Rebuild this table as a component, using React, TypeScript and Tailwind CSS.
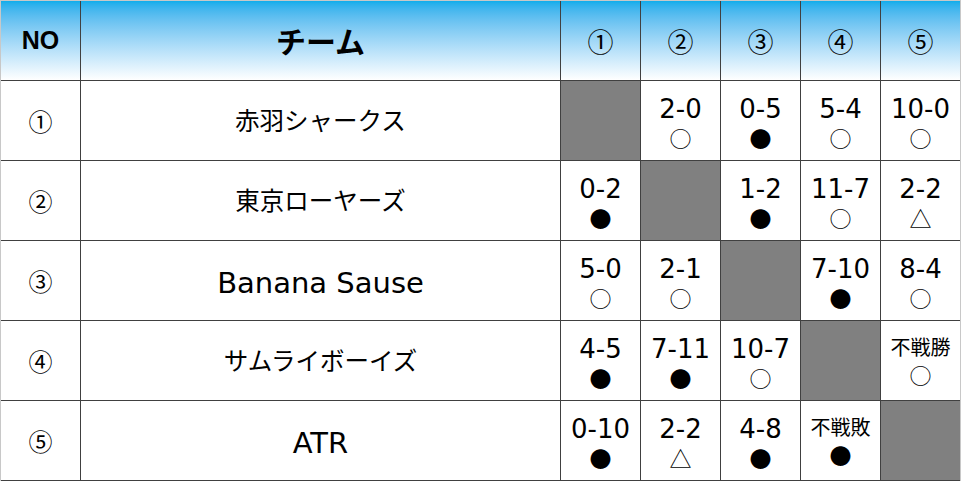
const teams = ["赤羽シャークス", "東京ローヤーズ", "Banana Sause", "サムライボーイズ", "ATR"];
const nums = ["①", "②", "③", "④", "⑤"];

// [score, mark] ; null = self
const results: ([string, string] | null)[][] = [
  [null, ["2-0", "○"], ["0-5", "●"], ["5-4", "○"], ["10-0", "○"]],
  [["0-2", "●"], null, ["1-2", "●"], ["11-7", "○"], ["2-2", "△"]],
  [["5-0", "○"], ["2-1", "○"], null, ["7-10", "●"], ["8-4", "○"]],
  [["4-5", "●"], ["7-11", "●"], ["10-7", "○"], null, ["不戦勝", "○"]],
  [["0-10", "●"], ["2-2", "△"], ["4-8", "●"], ["不戦敗", "●"], null],
];

const head = "bg-gradient-to-b from-[#0cadeb] to-white flex items-center justify-center";
const latin = { fontFamily: '"DejaVu Sans", "Noto Sans CJK JP", sans-serif' };

export default function App() {
  return (
    <div
      className="w-[961px] h-[481px] bg-white text-black border-x border-t border-[#c8c8c8]"
      style={{ fontFamily: '"Noto Sans CJK JP", "Noto Sans", sans-serif' }}
    >
      <div className="grid grid-cols-[79px_479px_79px_79px_79px_79px_79px] grid-rows-[79px_79px_79px_79px_79px_79px] gap-px bg-[#404040] border-b border-[#404040]">
        <div className={head + " text-[25px] font-bold"} style={{ fontFamily: '"Liberation Sans", sans-serif' }}>NO</div>
        <div className={head + " text-[30px] font-bold"}>チーム</div>
        {nums.map((n) => (
          <div key={n} className={head + " text-[26px]"}>{n}</div>
        ))}

        {teams.map((t, i) => {
          const isLatin = /^[A-Za-z ]+$/.test(t);
          return [
            <div key={"n" + i} className="bg-white flex items-center justify-center text-[24px]">{nums[i]}</div>,
            <div
              key={"t" + i}
              className={"bg-white flex items-center justify-center leading-none " + (isLatin ? "text-[29px] pt-[5px]" : "text-[24.5px]")}
              style={isLatin ? latin : undefined}
            >
              {t}
            </div>,
            ...results[i].map((r, j) =>
              r === null ? (
                <div key={i + "-" + j} className="bg-[#808080]" />
              ) : r[0].includes("-") ? (
                <div key={i + "-" + j} className="bg-white flex flex-col items-center justify-center leading-none">
                  <span className="text-[26px] mt-[2px]" style={latin}>{r[0]}</span>
                  <span className="text-[22px] mt-[4px]">{r[1]}</span>
                </div>
              ) : (
                <div key={i + "-" + j} className="bg-white flex flex-col items-center justify-center leading-none">
                  <span className="text-[20px] mt-[1px]">{r[0]}</span>
                  <span className="text-[22px] mt-[6px]">{r[1]}</span>
                </div>
              )
            ),
          ];
        })}
      </div>
    </div>
  );
}
